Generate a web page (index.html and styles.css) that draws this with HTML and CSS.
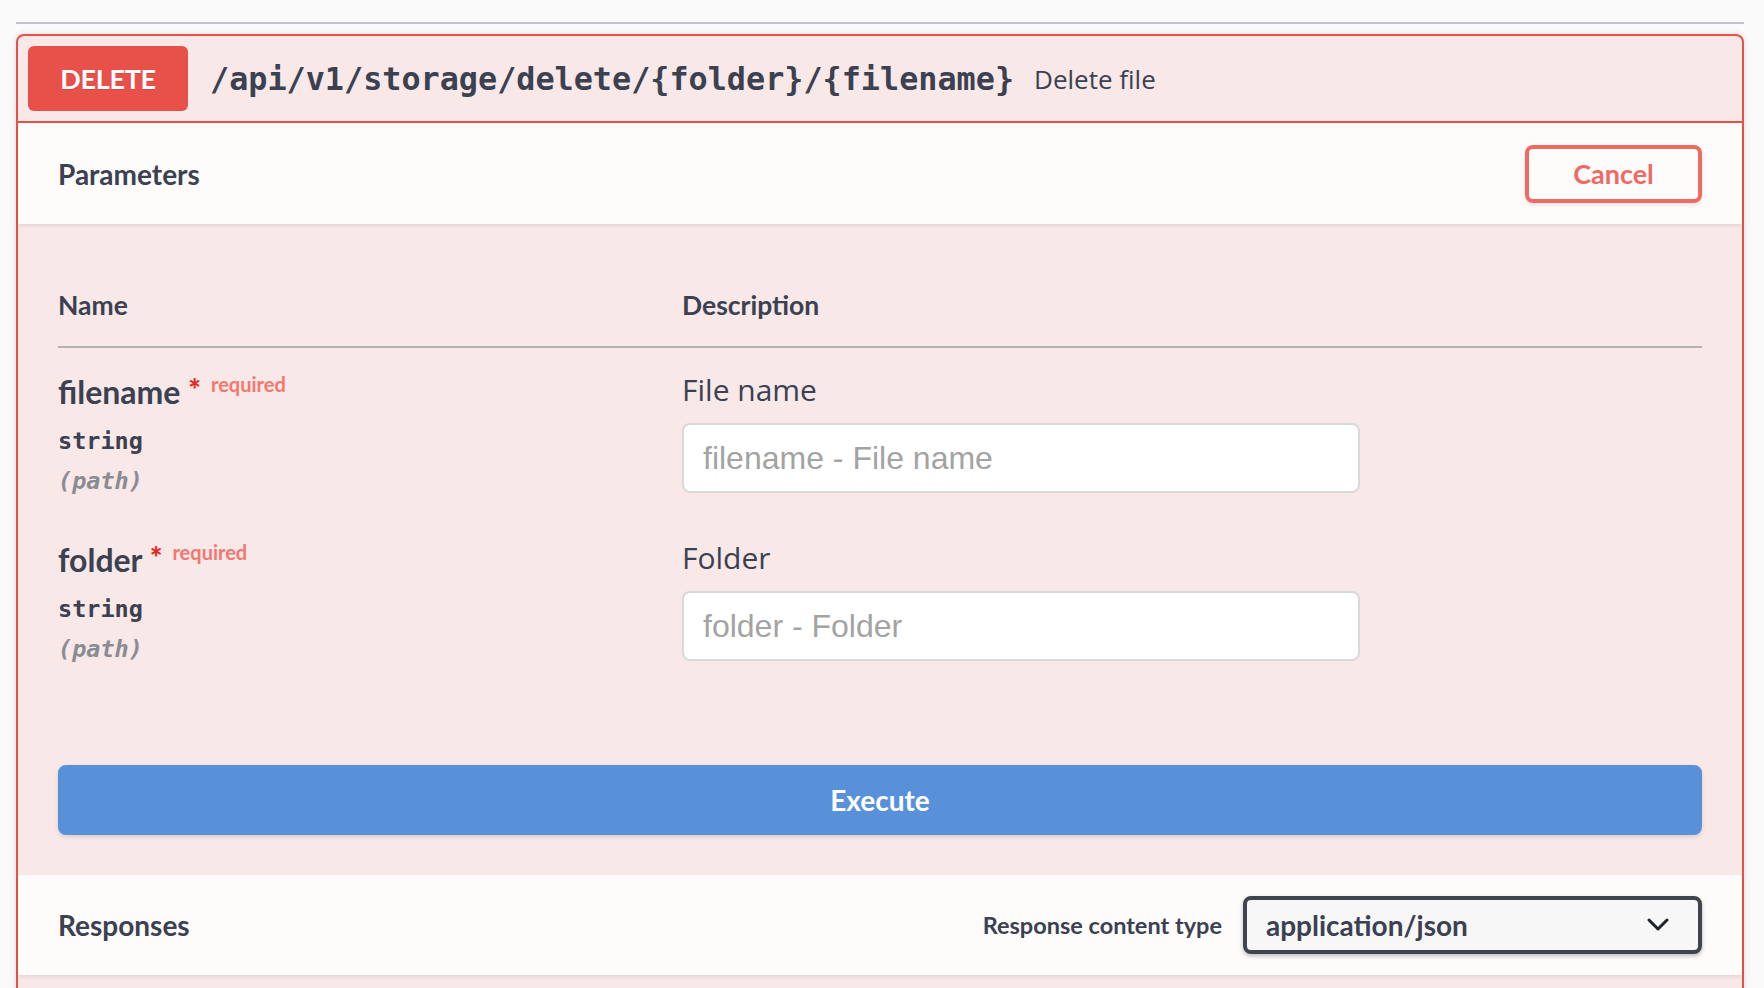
FILE: index.html
```html
<!DOCTYPE html>
<html lang="en">
<head>
<meta charset="utf-8">
<title>DELETE /api/v1/storage/delete/{folder}/{filename}</title>
<link rel="stylesheet" href="styles.css">
</head>
<body>
<div class="page">
  <div class="tag-rule"></div>
  <div class="opblock">
    <div class="summary">
      <span class="method">DELETE</span>
      <span class="path">/api/v1/storage/delete/{folder}/{filename}</span>
      <span class="summary-desc">Delete file</span>
    </div>

    <div class="section-header">
      <h4 class="section-title">Parameters</h4>
      <button class="btn-cancel">Cancel</button>
    </div>

    <div class="table-container">
      <div class="params-head">
        <div class="col-head">Name</div>
        <div class="col-head">Description</div>
      </div>

      <div class="param-row">
        <div class="param-name-col">
          <div class="param-name">filename <span class="req-star">*</span><span class="req-text">required</span></div>
          <div class="param-type">string</div>
          <div class="param-in">(path)</div>
        </div>
        <div class="param-desc-col">
          <p class="param-desc">File name</p>
          <input class="param-input" type="text" placeholder="filename - File name">
        </div>
      </div>

      <div class="param-row">
        <div class="param-name-col">
          <div class="param-name">folder <span class="req-star">*</span><span class="req-text">required</span></div>
          <div class="param-type">string</div>
          <div class="param-in">(path)</div>
        </div>
        <div class="param-desc-col">
          <p class="param-desc">Folder</p>
          <input class="param-input" type="text" placeholder="folder - Folder">
        </div>
      </div>
    </div>

    <div class="execute-wrapper">
      <button class="btn-execute">Execute</button>
    </div>

    <div class="section-header responses-header">
      <h4 class="section-title">Responses</h4>
      <div class="content-type">
        <span class="ct-label">Response content type</span>
        <div class="select">
          <span class="select-value">application/json</span>
          <svg class="chevron" width="22" height="14" viewBox="0 0 22 14" aria-hidden="true">
            <path d="M2 2 L11 11 L20 2" fill="none" stroke="#1f2229" stroke-width="3" stroke-linecap="round" stroke-linejoin="round"/>
          </svg>
        </div>
      </div>
    </div>
    <div class="responses-body"></div>
  </div>
</div>
</body>
</html>
```

FILE: styles.css
```css
* { box-sizing: border-box; }

html, body {
  margin: 0;
  padding: 0;
  background: #fafafa;
  color: #3b4151;
  font-family: "Lato", "Open Sans", sans-serif;
}

.page {
  padding: 0 20px 0 16px;
}

.tag-rule {
  height: 24px;
  border-bottom: 2px solid #c2c3c8;
}

.opblock {
  margin-top: 10px;
  border: 2px solid #e8504a;
  border-radius: 8px;
  background: rgba(232, 80, 74, 0.1);
  box-shadow: 0 0 6px rgba(0, 0, 0, 0.12);
}

/* summary */
.summary {
  display: flex;
  align-items: center;
  padding: 10px;
  border-bottom: 2px solid #e8504a;
}

.method {
  display: flex;
  align-items: center;
  justify-content: center;
  width: 160px;
  height: 65px;
  border-radius: 6px;
  background: #e8504a;
  color: #fff;
  font-family: "Lato", sans-serif;
  font-weight: 700;
  font-size: 27px;
  letter-spacing: -0.3px;
  text-shadow: 0 1px 0 rgba(0, 0, 0, 0.1);
}

.path {
  padding: 0 20px 0 22px;
  font-family: "DejaVu Sans Mono", "Liberation Mono", monospace;
  font-weight: 700;
  font-size: 31.8px;
  color: #3b4151;
}

.summary-desc {
  font-family: "Open Sans", sans-serif;
  font-size: 26px;
  color: #3b4151;
}

/* section headers */
.section-header {
  display: flex;
  align-items: center;
  justify-content: space-between;
  min-height: 101px;
  padding: 16px 40px;
  background: rgba(255, 255, 255, 0.8);
  box-shadow: 0 2px 4px rgba(0, 0, 0, 0.08);
}

.section-title {
  margin: 0;
  font-size: 28px;
  font-weight: 700;
  color: #3b4151;
}

.btn-cancel {
  width: 177px;
  height: 58px;
  border: 4px solid #ef6a63;
  border-radius: 8px;
  background: transparent;
  color: #ef6a63;
  font-family: "Lato", sans-serif;
  font-weight: 700;
  font-size: 27px;
  box-shadow: 0 2px 4px rgba(0, 0, 0, 0.1);
}

/* parameters table */
.table-container {
  padding: 40px 40px;
}

.params-head {
  display: grid;
  grid-template-columns: 624px 1fr;
  padding: 24px 0;
  border-bottom: 2px solid #b6b0b4;
}

.col-head {
  font-size: 26.5px;
  line-height: 34px;
  font-weight: 700;
  color: #3b4151;
}

.param-row {
  display: grid;
  grid-template-columns: 624px 1fr;
  padding: 20px 0;
}

.param-name {
  height: 48px;
  font-size: 32px;
  line-height: 48px;
  font-weight: 700;
  color: #3b4151;
  white-space: nowrap;
}

.req-star {
  position: relative;
  top: -3px;
  font-size: 30px;
  line-height: 1;
  font-weight: 900;
  color: #e8281f;
}

.req-text {
  position: relative;
  top: -12px;
  padding-left: 10px;
  font-size: 20px;
  line-height: 1;
  font-weight: 700;
  color: #f17870;
}

.param-type {
  padding: 10px 0;
  font-family: "DejaVu Sans Mono", monospace;
  font-weight: 700;
  font-size: 23.5px;
  line-height: 30px;
  color: #3b4151;
}

.param-in {
  font-family: "DejaVu Sans Mono", monospace;
  font-weight: 700;
  font-style: italic;
  font-size: 23.5px;
  line-height: 30px;
  color: #8a8c93;
}

.param-desc {
  margin: 0;
  font-family: "Open Sans", sans-serif;
  font-size: 30px;
  line-height: 44px;
  color: #3b4151;
}

.param-input {
  display: block;
  width: 678px;
  height: 70px;
  margin-top: 11px;
  padding: 0 19px;
  border: 2px solid #d9d9d9;
  border-radius: 8px;
  background: #fff;
  font-family: "Liberation Sans", Arial, sans-serif;
  font-size: 32px;
  color: #3b4151;
  outline: none;
}

.param-input::placeholder {
  color: #a3a3a3;
}

/* execute */
.execute-wrapper {
  padding: 41px 40px 40px;
}

.btn-execute {
  display: block;
  width: 100%;
  height: 70px;
  border: 2px solid #5891da;
  border-radius: 8px;
  background: #5891da;
  color: #fff;
  font-family: "Lato", sans-serif;
  font-weight: 700;
  font-size: 28px;
  box-shadow: 0 2px 4px rgba(0, 0, 0, 0.12);
}

/* responses */
.responses-header {
  min-height: 100px;
}

.content-type {
  display: flex;
  align-items: center;
  gap: 21px;
}

.ct-label {
  font-size: 23.5px;
  font-weight: 700;
  color: #3b4151;
}

.select {
  display: flex;
  align-items: center;
  justify-content: space-between;
  width: 459px;
  height: 58px;
  padding: 0 29px 0 19px;
  border: 4px solid #41444e;
  border-radius: 8px;
  background: #f7f7f7;
  box-shadow: 0 2px 4px rgba(0, 0, 0, 0.25);
}

.select-value {
  font-size: 28px;
  font-weight: 700;
  color: #3b4151;
}

.chevron {
  display: block;
}

.responses-body {
  height: 60px;
}
```
